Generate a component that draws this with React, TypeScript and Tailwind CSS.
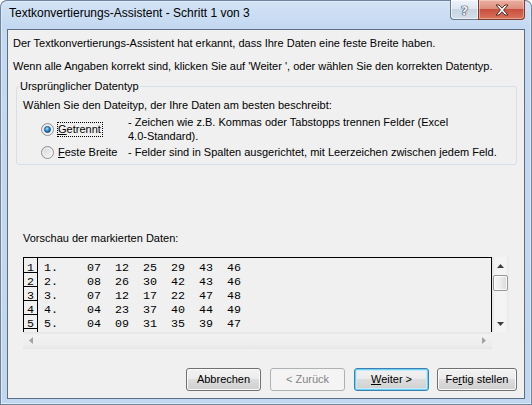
import React from "react";

type RadioProps = { checked?: boolean; id: string };

function Radio({ checked, id }: RadioProps) {
  return (
    <svg width="13" height="13" viewBox="0 0 13 13" className="shrink-0">
      <defs>
        <linearGradient id={`${id}-bg`} x1="0" y1="0" x2="1" y2="1">
          <stop offset="0" stopColor="#d2d2d2" />
          <stop offset="1" stopColor="#fbfbfb" />
        </linearGradient>
        <radialGradient id={`${id}-dot`} cx="0.42" cy="0.38" r="0.62">
          <stop offset="0" stopColor="#b4e6fc" />
          <stop offset="0.5" stopColor="#2f90d6" />
          <stop offset="1" stopColor="#0d4982" />
        </radialGradient>
      </defs>
      <circle cx="6.5" cy="6.5" r="6" fill={`url(#${id}-bg)`} stroke="#8d8f90" />
      <circle cx="6.5" cy="6.5" r="4.6" fill="none" stroke="#f6f6f6" strokeWidth="0.8" />
      {checked && (
        <circle cx="6.5" cy="6.5" r="3.1" fill={`url(#${id}-dot)`} stroke="#1f5486" strokeWidth="0.7" />
      )}
    </svg>
  );
}

function ArrowUp({ color }: { color: string }) {
  return (
    <svg width="7" height="4" viewBox="0 0 7 4">
      <polygon points="3.5,0 7,4 0,4" fill={color} />
    </svg>
  );
}

function ArrowDown({ color }: { color: string }) {
  return (
    <svg width="7" height="4" viewBox="0 0 7 4">
      <polygon points="0,0 7,0 3.5,4" fill={color} />
    </svg>
  );
}

function ArrowLeft({ color }: { color: string }) {
  return (
    <svg width="4" height="7" viewBox="0 0 4 7">
      <polygon points="4,0 4,7 0,3.5" fill={color} />
    </svg>
  );
}

function ArrowRight({ color }: { color: string }) {
  return (
    <svg width="4" height="7" viewBox="0 0 4 7">
      <polygon points="0,0 4,3.5 0,7" fill={color} />
    </svg>
  );
}

const rows = [
  ["1", "1.", "07", "12", "25", "29", "43", "46"],
  ["2", "2.", "08", "26", "30", "42", "43", "46"],
  ["3", "3.", "07", "12", "17", "22", "47", "48"],
  ["4", "4.", "04", "23", "37", "40", "44", "49"],
  ["5", "5.", "04", "09", "31", "35", "39", "47"],
];

export default function App() {
  return (
    <div className="flex h-[405px] w-[532px] flex-col overflow-hidden rounded-t-[7px] bg-[linear-gradient(180deg,#d3e3f5_0px,#c4d9f1_26px,#c1d7ef_100%)] font-['Liberation_Sans',Arial,sans-serif] text-[11px] text-black shadow-[inset_0_0_0_1px_#6f849d,inset_0_0_0_2px_#dce9f7]">
      {/* caption bar */}
      <div className="flex h-[29px] shrink-0 items-start">
        <div className="pl-[9px] pt-[5px] text-[12px] leading-[16px] text-black">
          Textkonvertierungs-Assistent - Schritt 1 von 3
        </div>
        <div className="ml-auto mr-[7px] flex">
          <div className="flex h-[20px] w-[28px] items-center justify-center rounded-bl-[4px] border border-r-0 border-t-0 border-[#6b7b8f] bg-[linear-gradient(180deg,#eef3f9_0%,#dfe7f1_45%,#c8d4e2_50%,#d5dfea_100%)] shadow-[inset_0_0_0_1px_rgba(255,255,255,0.55)]">
            <span className="pt-[1px] font-['DejaVu_Sans',sans-serif] text-[13px] font-bold leading-none text-[#e9eef4] [text-shadow:0_0_1px_#26364a,0_0_1px_#26364a,0_0_1px_#26364a]">
              ?
            </span>
          </div>
          <div className="flex h-[20px] w-[47px] items-center justify-center rounded-br-[4px] border border-t-0 border-[#7d3c33] bg-[linear-gradient(180deg,#eab0a2_0%,#de907e_45%,#c9503e_50%,#d8735c_100%)] shadow-[inset_0_0_0_1px_rgba(255,225,215,0.45)]">
            <svg width="14" height="12" viewBox="0 0 14 12">
              <polygon
                points="1,1 4,1 7,4.2 10,1 13,1 8.6,6 13,11 10,11 7,7.8 4,11 1,11 5.4,6"
                fill="#ffffff"
                stroke="#4e2620"
                strokeWidth="1"
                strokeLinejoin="round"
              />
            </svg>
          </div>
        </div>
      </div>

      {/* client area */}
      <div className="mb-[6px] ml-[7px] mr-[7px] flex flex-1 flex-col border border-[#5b6e83] bg-[#f0f0f0] pl-[5px]">
        <div className="mt-[6px] leading-[14px]">
          Der Textkonvertierungs-Assistent hat erkannt, dass Ihre Daten eine feste Breite haben.
        </div>
        <div className="mt-[9px] leading-[14px]">
          Wenn alle Angaben korrekt sind, klicken Sie auf 'Weiter ', oder wählen Sie den korrekten Datentyp.
        </div>

        <fieldset className="ml-[3px] mt-[6px] w-[501px] rounded-[3px] border border-[#d5dfe5] pb-[4px] pl-[6px]">
          <legend className="-ml-[4px] px-[1px] leading-[14px]">Ursprünglicher Datentyp</legend>
          <div className="mt-[5px] leading-[14px]">
            Wählen Sie den Dateityp, der Ihre Daten am besten beschreibt:
          </div>

          <div className="mt-[3px] flex">
            <div className="flex w-[105px] shrink-0 items-center pl-[18px]">
              <Radio id="r-getrennt" checked />
              <span className="ml-[3px] border border-dotted border-black pr-[1px] leading-[13px]">
                <span className="underline">G</span>etrennt
              </span>
            </div>
            <div className="leading-[14px]">
              <div>- Zeichen wie z.B. Kommas oder Tabstopps trennen Felder (Excel</div>
              <div>4.0-Standard).</div>
            </div>
          </div>

          <div className="mt-[2px] flex">
            <div className="flex w-[105px] shrink-0 items-center pl-[18px]">
              <Radio id="r-feste" />
              <span className="ml-[3px] border border-transparent leading-[13px]">
                <span className="underline">F</span>este Breite
              </span>
            </div>
            <div className="leading-[14px]">
              - Felder sind in Spalten ausgerichtet, mit Leerzeichen zwischen jedem Feld.
            </div>
          </div>
        </fieldset>

        <div className="ml-[10px] mt-[66px] leading-[14px]">Vorschau der markierten Daten:</div>

        {/* preview grid with scroll bars */}
        <div className="ml-[10px] mt-[12px] grid grid-cols-[469px_17px] grid-rows-[75px_17px]">
          <div className="flex overflow-hidden border-l border-r border-t border-black bg-[#f0f0f0] font-['Liberation_Mono','Courier_New',monospace] text-[11.67px]">
            <div className="w-[14px] shrink-0 border-r border-black pt-[1px]">
              {rows.map((r) => (
                <div key={r[0]} className="h-[14px] border-b border-black text-center leading-[18px]">
                  {r[0]}
                </div>
              ))}
            </div>
            <div className="pl-[6px] pt-[1px]">
              {rows.map((r) => (
                <div key={r[0]} className="grid h-[14px] grid-cols-[43px_repeat(6,28px)] whitespace-pre leading-[18px]">
                  {r.slice(1).map((c, i) => (
                    <span key={i}>{c}</span>
                  ))}
                </div>
              ))}
            </div>
          </div>

          <div className="flex flex-col bg-[linear-gradient(90deg,#e4e4e4_0px,#f3f3f3_3px,#f4f4f4_13px,#e9e9e9_17px)]">
            <div className="flex h-[17px] items-center justify-center">
              <ArrowUp color="#3f3f3f" />
            </div>
            <div className="ml-[1px] mt-[1px] h-[16px] w-[15px] rounded-[2px] border border-[#979797] bg-[linear-gradient(90deg,#f6f6f6_0%,#ececec_50%,#d9d9d9_100%)] shadow-[inset_0_0_0_1px_rgba(255,255,255,0.8)]" />
            <div className="flex-1" />
            <div className="flex h-[17px] items-center justify-center">
              <ArrowDown color="#3f3f3f" />
            </div>
          </div>

          <div className="flex items-center justify-between bg-[linear-gradient(180deg,#e3e3e3_0px,#f1f1f1_3px,#ededed_13px,#e6e6e6_17px)] px-[6px]">
            <ArrowLeft color="#a3a3a3" />
            <ArrowRight color="#a3a3a3" />
          </div>
          <div />
        </div>

        {/* wizard buttons */}
        <div className="mr-[7px] mt-[19px] flex justify-end">
          <div className="flex h-[23px] w-[75px] items-center justify-center rounded-[3px] border border-[#707070] bg-[linear-gradient(180deg,#f2f2f2_0%,#ebebeb_50%,#dddddd_50%,#cfcfcf_100%)] shadow-[inset_0_0_0_1px_#fbfbfb]">
            Abbrechen
          </div>
          <div className="ml-[9px] flex h-[23px] w-[75px] items-center justify-center rounded-[3px] border border-[#adb2b5] bg-[#f4f4f4] text-[#838383]">
            &lt; Zurück
          </div>
          <div className="ml-[9px] flex h-[23px] w-[75px] items-center justify-center rounded-[3px] border border-[#3c7fb1] bg-[linear-gradient(180deg,#f2f2f2_0%,#ebebeb_50%,#dddddd_50%,#cfcfcf_100%)] shadow-[inset_0_0_0_1px_#6fcff5,inset_0_0_0_2px_#c6ecfb]">
            <span>
              <span className="underline">W</span>eiter &gt;
            </span>
          </div>
          <div className="ml-[8px] flex h-[23px] w-[80px] items-center justify-center rounded-[3px] border border-[#707070] bg-[linear-gradient(180deg,#f2f2f2_0%,#ebebeb_50%,#dddddd_50%,#cfcfcf_100%)] shadow-[inset_0_0_0_1px_#fbfbfb]">
            <span>
              Fe<span className="underline">r</span>tig stellen
            </span>
          </div>
        </div>
      </div>
    </div>
  );
}
